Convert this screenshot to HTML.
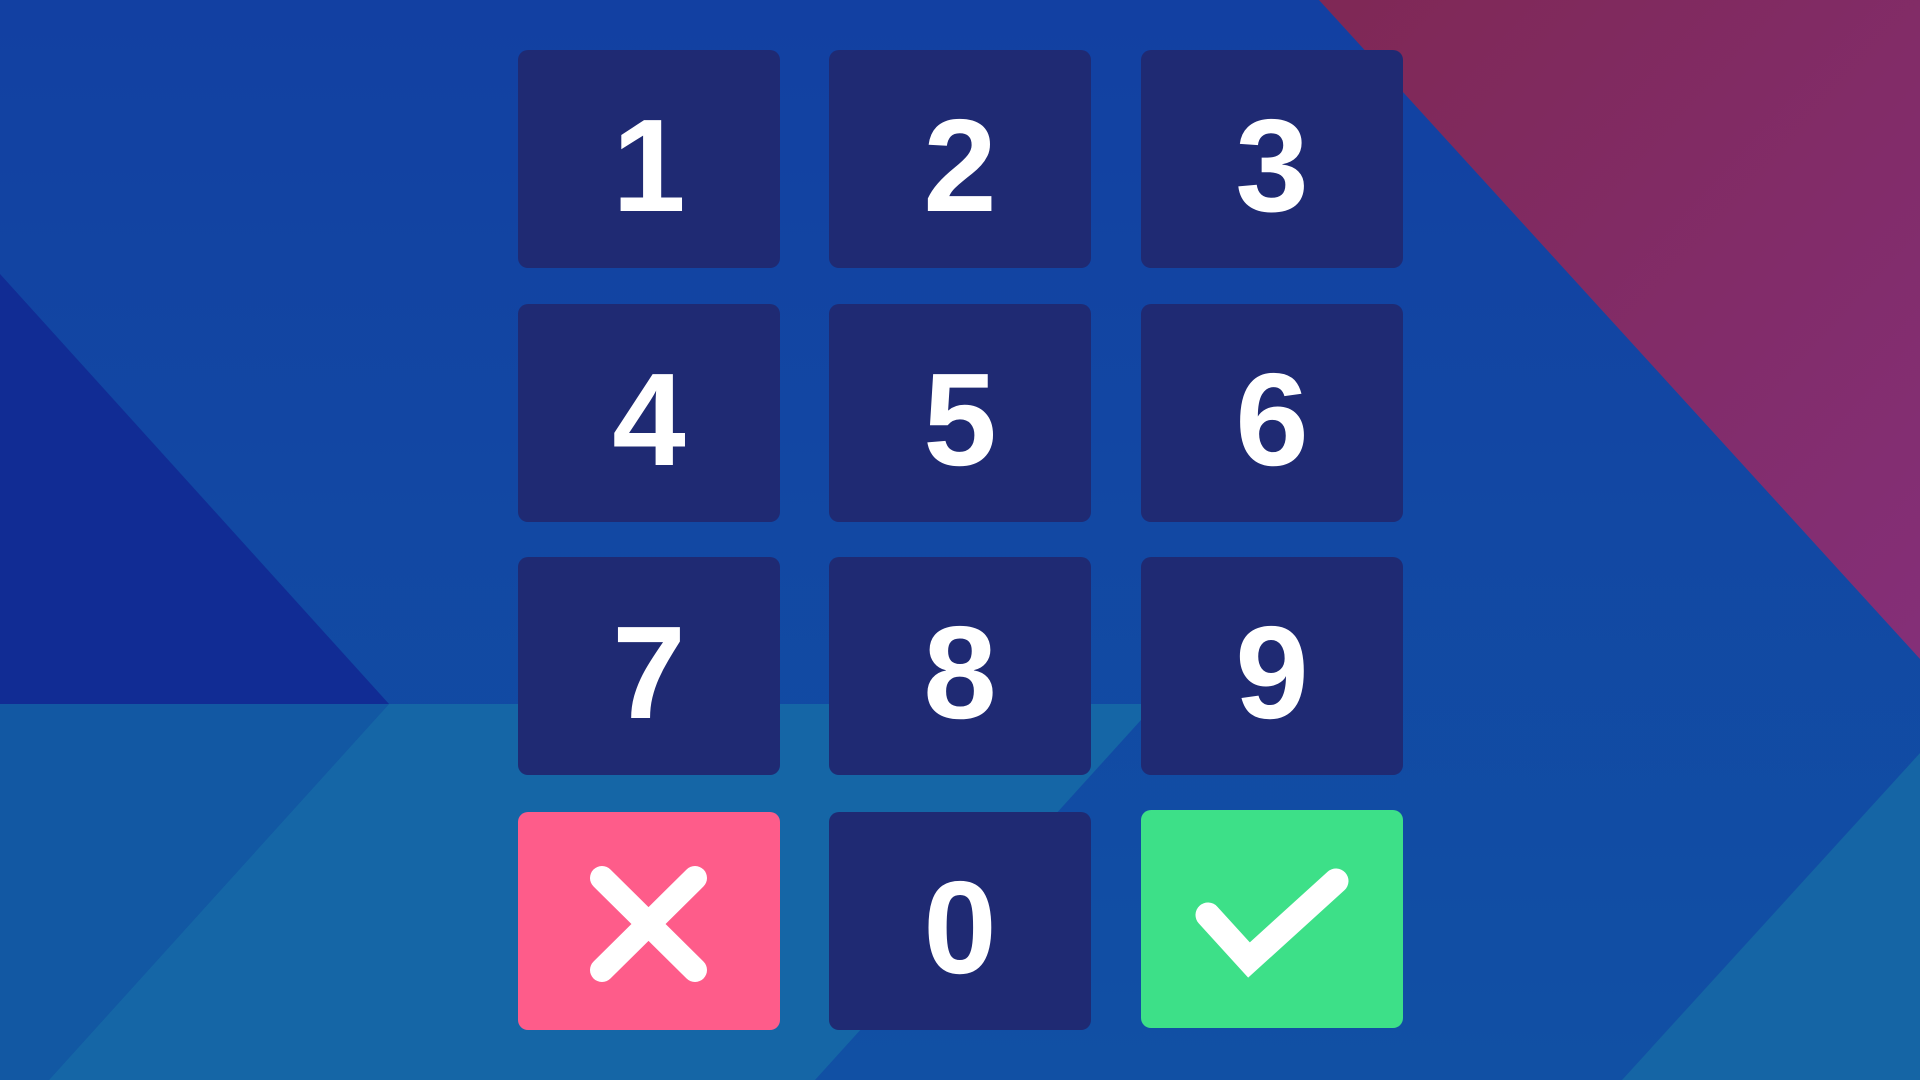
<!DOCTYPE html>
<html><head><style>
html,body{margin:0;padding:0;width:1920px;height:1080px;overflow:hidden}
body{position:relative;font-family:"Liberation Sans",sans-serif}
svg.bg{position:absolute;left:0;top:0}
.b{position:absolute;width:262px;height:218px;background:#1f2a73;border-radius:10px;color:#fff;font-weight:bold;font-size:132px;display:flex;align-items:center;justify-content:center;line-height:1}
.b span{position:relative;top:7px}
.c1{left:518px}.c2{left:829px}.c3{left:1141px}
.r1{top:50px}.r2{top:304px}.r3{top:557px}.r4{top:812px}
</style></head><body>
<svg class="bg" width="1920" height="1080" viewBox="0 0 1920 1080">
<defs>
<linearGradient id="g1" x1="0" y1="0" x2="0" y2="1"><stop offset="0" stop-color="#1240a2"/><stop offset="1" stop-color="#1150a4"/></linearGradient>
<linearGradient id="g2" x1="0" y1="0" x2="1" y2="1"><stop offset="0" stop-color="#7f2855"/><stop offset="1" stop-color="#842f78"/></linearGradient>
</defs>
<rect width="1920" height="1080" fill="url(#g1)"/>
<polygon points="1319,0 1920,0 1920,659" fill="url(#g2)"/>
<polygon points="0,274 389,704 0,704" fill="#112c94"/>
<polygon points="0,704 389,704 49,1080 0,1080" fill="#1258a3"/>
<polygon points="389,704 1141,704 1141,720 815,1080 49,1080" fill="#1566a6"/>
<polygon points="1920,753 1622,1080 1920,1080" fill="#1565a5"/>
</svg>
<div class="b c1 r1"><span>1</span></div><div class="b c2 r1"><span>2</span></div><div class="b c3 r1"><span>3</span></div>
<div class="b c1 r2"><span>4</span></div><div class="b c2 r2"><span>5</span></div><div class="b c3 r2"><span>6</span></div>
<div class="b c1 r3"><span>7</span></div><div class="b c2 r3"><span>8</span></div><div class="b c3 r3"><span>9</span></div>
<div class="b c1 r4" style="background:#fe5c8a"><svg width="262" height="218" viewBox="0 0 262 218"><path d="M84,66 L177,158 M177,66 L84,158" stroke="#fff" stroke-width="24" stroke-linecap="round" fill="none"/></svg></div>
<div class="b c2 r4"><span>0</span></div>
<div class="b c3 r4" style="background:#3de088;top:810px"><svg width="262" height="218" viewBox="0 0 262 218"><path d="M67,105 L108,150 L195,71" stroke="#fff" stroke-width="25" stroke-linecap="round" fill="none"/></svg></div>
</body></html>
